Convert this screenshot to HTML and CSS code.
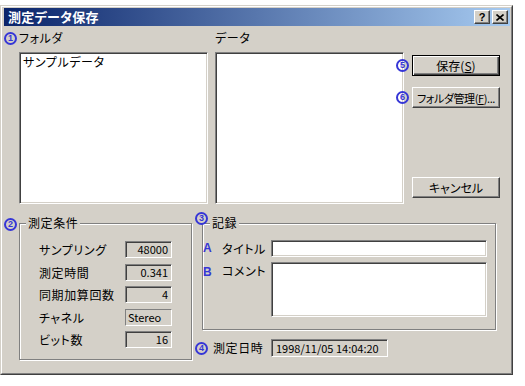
FILE: index.html
```html
<!DOCTYPE html>
<html lang="ja">
<head>
  <meta charset="UTF-8" />
  <meta name="viewport" content="width=device-width, initial-scale=1.0"/>
  <title>測定データ保存</title>
  <link rel="stylesheet" href="styles.css">
</head>
<body>
  <div class="window">
    <div class="frame">
      <div class="titlebar">
        <span class="title">測定データ保存</span>
        <div class="caption-btns">
          <span class="cap-btn">?</span>
          <span class="cap-btn">
            <svg width="8" height="7" viewBox="0 0 8 7"><path d="M0.5 0.5 L7.5 6.5 M7.5 0.5 L0.5 6.5" stroke="#000" stroke-width="1.6" fill="none"/></svg>
          </span>
        </div>
      </div>

      <div class="dialog">
        <div class="top">
          <div class="col">
            <div class="label"><span class="mark m-left">1</span>フォルダ</div>
            <div class="listbox">
              <div class="item">サンプルデータ</div>
            </div>
          </div>
          <div class="col col-data">
            <div class="label">データ</div>
            <div class="listbox"></div>
          </div>
          <div class="btn-col">
            <button class="btn default"><span class="mark m-btn">5</span>保存(<u>S</u>)</button>
            <button class="btn narrow"><span class="mark m-btn">6</span>フォルダ管理(<u>F</u>)...</button>
            <button class="btn cancel">キャンセル</button>
          </div>
        </div>

        <div class="bottom">
          <div class="group cond">
            <span class="mark m-group2">2</span>
            <div class="group-title">測定条件</div>
            <div class="cond-rows">
              <span class="cond-label">サンプリング</span><span class="field">48000</span>
              <span class="cond-label">測定時間</span><span class="field">0.341</span>
              <span class="cond-label">同期加算回数</span><span class="field">4</span>
              <span class="cond-label">チャネル</span><span class="field flat">Stereo</span>
              <span class="cond-label">ビット数</span><span class="field">16</span>
            </div>
          </div>

          <div class="right">
            <div class="group record">
              <span class="mark m-group3">3</span>
              <div class="group-title">記録</div>
              <div class="rec-rows">
                <span class="rec-label"><span class="letter">A</span>タイトル</span>
                <div class="input"></div>
                <span class="rec-label top"><span class="letter">B</span>コメント</span>
                <div class="input memo"></div>
              </div>
            </div>
            <div class="date-row">
              <span class="date-label"><span class="mark m-date">4</span>測定日時</span>
              <span class="field date">1998/11/05 14:04:20</span>
            </div>
          </div>
        </div>
      </div>
    </div>
  </div>
</body>
</html>
```

FILE: styles.css
```css
* {
  box-sizing: border-box;
}
body {
  margin: 0;
  background: #fff;
  font-family: "Noto Sans CJK JP", "Noto Sans", sans-serif;
  font-size: 12px;
  font-feature-settings: "palt";
  letter-spacing: 0.6px;
  color: #000;
}
.window {
  margin-top: 5px;
  width: 513px;
  height: 370px;
  background: #d4d0c8;
  border: 1px solid;
  border-color: #d4d0c8 #404040 #404040 #d4d0c8;
}
.frame {
  height: 100%;
  border: 1px solid;
  border-color: #fff #808080 #808080 #fff;
  padding: 1px 1px 1px 2px;
}

/* title bar */
.titlebar {
  height: 18px;
  display: flex;
  align-items: center;
  justify-content: space-between;
  padding: 0 2px 0 4px;
  background: linear-gradient(to right, #0a246a, #a6caf0);
}
.title {
  color: #fff;
  font-weight: bold;
  font-size: 13px;
  line-height: 14px;
  letter-spacing: 0.3px;
}
.caption-btns {
  display: flex;
  gap: 2px;
}
.cap-btn {
  width: 16px;
  height: 14px;
  display: flex;
  align-items: center;
  justify-content: center;
  background: #d4d0c8;
  border: 1px solid;
  border-color: #fff #404040 #404040 #fff;
  box-shadow: inset -1px -1px #808080;
  font-family: "Liberation Sans", sans-serif;
  font-weight: bold;
  font-size: 11px;
  line-height: 11px;
  letter-spacing: 0;
}

/* dialog */
.dialog {
  padding: 5px 0 0 15px;
}
.top {
  display: flex;
}
.col {
  width: 189px;
  margin-right: 7px;
}
.col-data {
  margin-right: 8px;
}
.label {
  height: 21px;
  line-height: 14px;
  position: relative;
}
.listbox {
  height: 152px;
  background: #fff;
  border: 1px solid;
  border-color: #808080 #fff #fff #808080;
  box-shadow: inset 1px 1px #404040, inset -1px -1px #d4d0c8;
  padding: 1px 3px;
}
.item {
  line-height: 15px;
}

/* blue numbered callouts */
.mark {
  position: absolute;
  width: 13px;
  height: 13px;
  border: 2px solid #3636d6;
  border-radius: 50%;
  display: flex;
  align-items: center;
  justify-content: center;
  color: #3636d6;
  font-family: "Liberation Sans", sans-serif;
  font-weight: bold;
  font-size: 9px;
  line-height: 9px;
  letter-spacing: 0;
}
.m-left {
  left: -15px;
  top: 1px;
}
.m-btn {
  left: -17px;
  top: 3px;
}
.m-group2 {
  left: -16px;
  top: -6px;
}
.m-group3 {
  left: -8px;
  top: -12px;
}
.m-date {
  left: -18px;
  top: 1px;
}

/* buttons */
.btn-col {
  display: flex;
  flex-direction: column;
  width: 88px;
  padding-top: 24px;
}
.btn {
  position: relative;
  height: 21px;
  padding: 0;
  font: inherit;
  font-size: 12px;
  letter-spacing: 0;
  white-space: nowrap;
  color: #000;
  background: #d4d0c8;
  border: 1px solid;
  border-color: #fff #404040 #404040 #fff;
  box-shadow: inset -1px -1px #808080;
}
.btn.narrow {
  font-size: 11px;
  letter-spacing: -0.4px;
}
.btn + .btn {
  margin-top: 11px;
}
.btn.default {
  border: 1px solid #000;
  box-shadow: inset 1px 1px #fff, inset -1px -1px #404040, inset -2px -2px #808080;
}
.btn.cancel {
  margin-top: 69px;
}

/* lower area */
.bottom {
  display: flex;
  margin-top: 19px;
}
.group {
  position: relative;
  border: 1px solid #808080;
  box-shadow: inset 1px 1px #fff, 1px 1px #fff;
}
.group-title {
  width: fit-content;
  margin: -8px 0 0 6px;
  padding: 0 2px;
  line-height: 14px;
  background: #d4d0c8;
}
.cond {
  width: 173px;
  height: 137px;
}
.cond-rows {
  display: grid;
  grid-template-columns: 86px 47px;
  row-gap: 5.5px;
  padding: 11px 0 0 19px;
}
.cond-label {
  line-height: 17px;
  white-space: nowrap;
}
.field {
  height: 17px;
  border: 1px solid;
  border-color: #808080 #fff #fff #808080;
  box-shadow: inset 1px 1px #404040;
  font-size: 11px;
  line-height: 15px;
  letter-spacing: 0;
  text-align: right;
  padding-right: 3px;
}
.field.flat {
  box-shadow: none;
  text-align: left;
  padding: 0 0 0 2px;
}

.right {
  margin-left: 10px;
}
.record {
  width: 294px;
  height: 107px;
}
.record .group-title {
  margin-left: 7px;
}
.rec-rows {
  display: grid;
  grid-template-columns: 49px 216px;
  row-gap: 5px;
  padding: 10px 0 0 19px;
}
.rec-label {
  position: relative;
  line-height: 17px;
}
.rec-label.top {
  align-self: start;
}
.letter {
  position: absolute;
  left: -19px;
  color: #3636d6;
  font-family: "Liberation Sans", sans-serif;
  font-weight: bold;
  font-size: 12px;
  letter-spacing: 0;
}
.rec-label.top .letter {
  top: 2px;
}
.input {
  height: 17px;
  background: #fff;
  border: 1px solid;
  border-color: #808080 #fff #fff #808080;
  box-shadow: inset 1px 1px #404040, inset -1px -1px #d4d0c8;
}
.input.memo {
  height: 55px;
}

.date-row {
  display: flex;
  align-items: center;
  margin-top: 9px;
  padding-left: 11px;
}
.date-label {
  position: relative;
  width: 58px;
  line-height: 14px;
}
.field.date {
  width: 117px;
  height: 18px;
  line-height: 16px;
  text-align: left;
  padding: 0 0 0 4px;
}
```
